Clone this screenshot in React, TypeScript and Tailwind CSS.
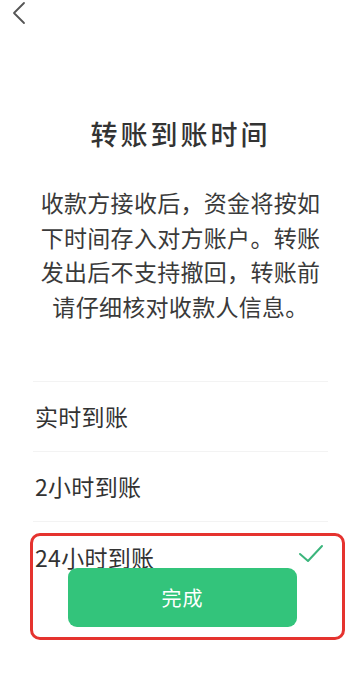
import React from 'react';

const options = ['实时到账', '2小时到账', '24小时到账'];

export default function App() {
  const selected = 2;

  return (
    <div
      className="relative h-[679px] w-full overflow-hidden bg-white text-[#333333]"
      style={{ fontFamily: '"Noto Sans CJK SC", "Noto Sans", sans-serif' }}
    >
      {/* top bar */}
      <div className="flex h-[26px] items-start pl-[12px] pt-[1px]">
        <svg width="16" height="24" viewBox="0 0 16 24" fill="none">
          <path
            d="M12 2 L2 12 L12 22"
            stroke="#555555"
            strokeWidth="1.8"
            strokeLinecap="round"
            strokeLinejoin="round"
          />
        </svg>
      </div>

      <h1 className="mt-[90px] text-center text-[27px] font-medium leading-[36px] tracking-[3px] text-[#333333]">
        转账到账时间
      </h1>

      <p className="mt-[33px] px-[38px] text-center text-[23px] leading-[34.7px] tracking-[0.3px] text-[#3a3a3a]">
        收款方接收后，资金将按如下时间存入对方账户。转账发出后不支持撤回，转账前请仔细核对收款人信息。
      </p>

      <ul className="mx-[33px] mt-[57px] border-t border-[#f3f3f3]">
        {options.map((label, i) => (
          <li
            key={label}
            className="flex h-[70px] items-center justify-between border-b border-[#f3f3f3] pl-[2px] pr-[4px] last:border-b-0"
          >
            <span className="text-[23px] tracking-[0.3px] text-[#333333]">{label}</span>
            {i === selected && (
              <svg width="26" height="20" viewBox="0 0 26 20" fill="none" className="-mt-[6px]">
                <path
                  d="M2 10 L10 17 L24 2"
                  stroke="#3bb57c"
                  strokeWidth="2"
                  strokeLinecap="round"
                  strokeLinejoin="round"
                />
              </svg>
            )}
          </li>
        ))}
      </ul>

      {/* floating confirm button */}
      <button className="absolute left-[68px] top-[568px] flex h-[59px] w-[229px] items-center justify-center rounded-[9px] bg-[#33c47b] text-[20px] tracking-[1px] text-white">
        完成
      </button>

      {/* red highlight annotation */}
      <div className="pointer-events-none absolute left-[30px] top-[533px] h-[107px] w-[315px] rounded-[10px] border-[3px] border-[#e5332f]" />
    </div>
  );
}
